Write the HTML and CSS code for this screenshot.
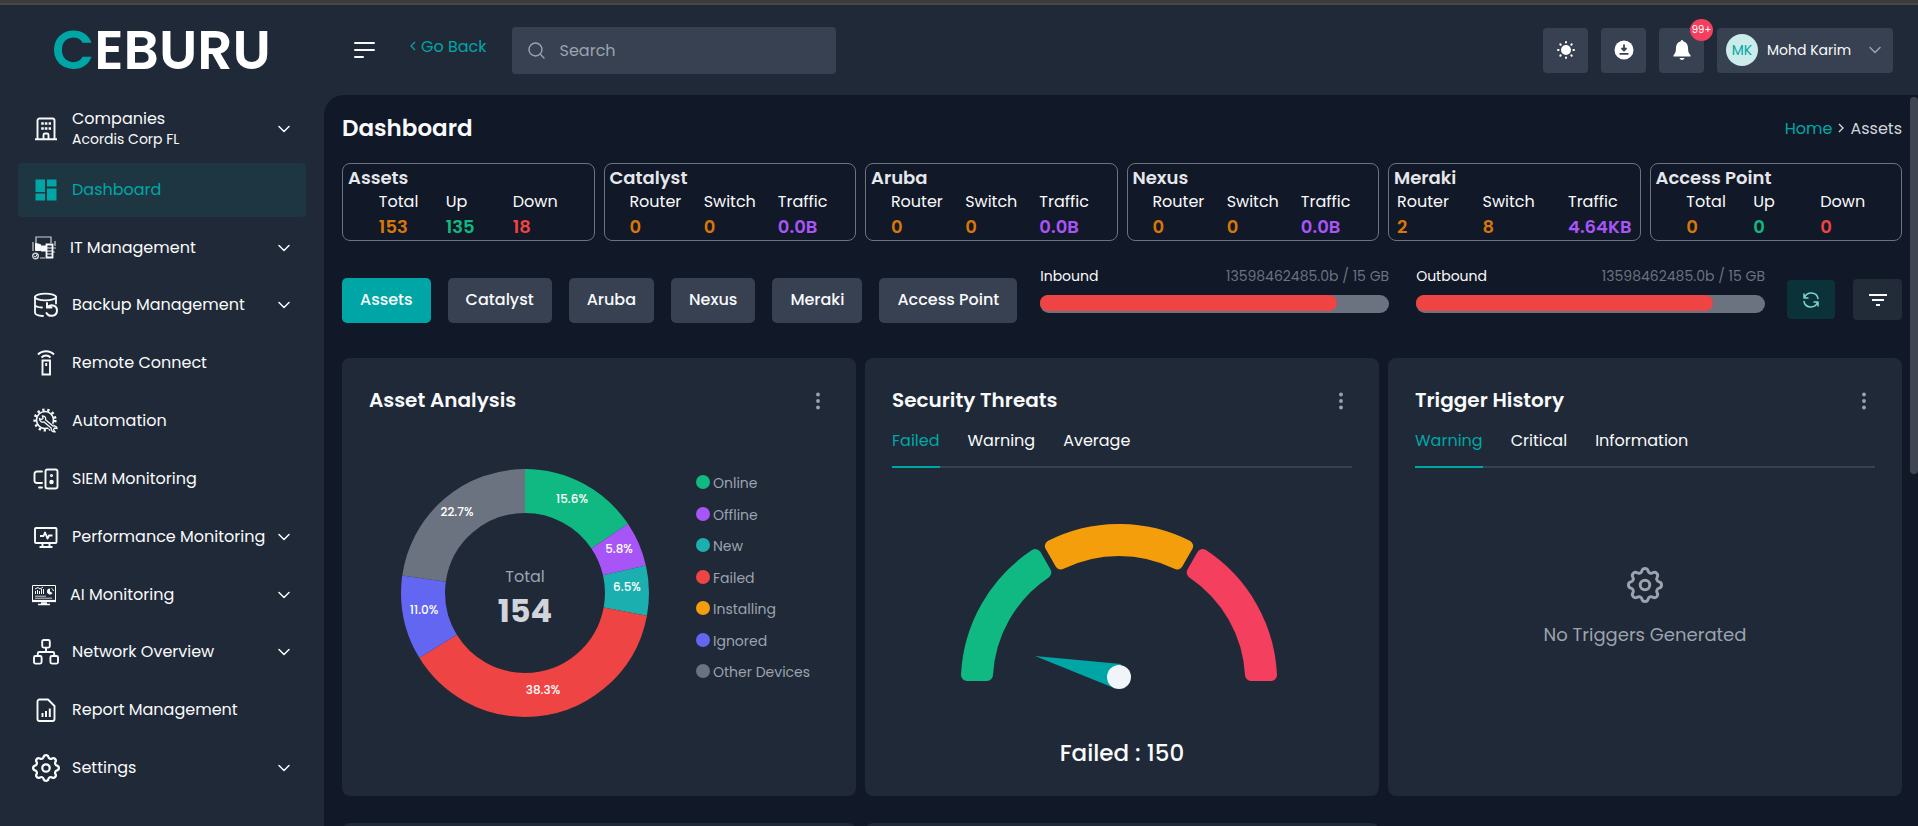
FILE: index.html
```html
<!DOCTYPE html>
<html lang="en">
<head>
    <meta charset="UTF-8">
    <meta name="viewport" content="width=device-width, initial-scale=1.0">
    <title>Ceburu - Dashboard</title>
    <link rel="stylesheet" href="styles.css">
</head>
<body>
    <!-- Shared icons -->
    <svg class="sprite" aria-hidden="true">
        <symbol id="icon-chevron" viewBox="0 0 12 8"><path d="M1 1.5l5 5 5-5" fill="none" stroke="currentColor" stroke-width="1.5" stroke-linecap="round" stroke-linejoin="round"/></symbol>
        <symbol id="icon-more" viewBox="0 0 4 18"><circle cx="2" cy="2.5" r="1.9" fill="currentColor"/><circle cx="2" cy="9" r="1.9" fill="currentColor"/><circle cx="2" cy="15.5" r="1.9" fill="currentColor"/></symbol>
        <symbol id="icon-gear" viewBox="2.2 2.2 19.6 19.6"><g fill="none" stroke="currentColor" stroke-width="1.6" stroke-linejoin="round"><path d="M10.325 4.317c.426-1.756 2.924-1.756 3.35 0a1.724 1.724 0 0 0 2.573 1.066c1.543-.94 3.31.826 2.37 2.37a1.724 1.724 0 0 0 1.065 2.572c1.756.426 1.756 2.924 0 3.35a1.724 1.724 0 0 0-1.066 2.573c.94 1.543-.826 3.31-2.37 2.37a1.724 1.724 0 0 0-2.572 1.065c-.426 1.756-2.924 1.756-3.35 0a1.724 1.724 0 0 0-2.573-1.066c-1.543.94-3.31-.826-2.37-2.37a1.724 1.724 0 0 0-1.065-2.572c-1.756-.426-1.756-2.924 0-3.35a1.724 1.724 0 0 0 1.066-2.573c-.94-1.543.826-3.31 2.37-2.37 1 .608 2.296.07 2.572-1.065z"/><circle cx="12" cy="12" r="2.6"/></g></symbol>
    </svg>

    <div class="window-edge"></div>
    <div class="app">
        <!-- Sidebar -->
        <aside class="sidebar">
            <a href="#" class="logo"><span class="logo-accent">C</span>EBURU</a>
            <nav class="menu">
                <a href="#" class="menu-item menu-company">
                    <svg class="menu-icon" viewBox="0 0 24 24" fill="none" stroke="currentColor" stroke-width="1.9"><path d="M1 22.2h22M3.5 22V3.5a2 2 0 0 1 2-2h13a2 2 0 0 1 2 2V22M9.5 22v-4a1.5 1.5 0 0 1 1.5-1.5h2a1.5 1.5 0 0 1 1.5 1.5v4"/><path d="M7.2 6.5h2.6M10.8 6.5h2.6M14.6 6.5h2.4M7.2 11.5h2.6M10.8 11.5h2.6M14.6 11.5h2.4" stroke-width="2.4"/></svg>
                    <span class="menu-label">Companies<small>Acordis Corp FL</small></span>
                    <svg class="chevron"><use href="#icon-chevron"/></svg>
                </a>
                <a href="#" class="menu-item active">
                    <svg class="menu-icon" viewBox="0 0 24 24" fill="currentColor"><path d="M1.5 1.5H11V14H1.5zM13 1.5h9.5v7H13zM1.5 15.5H11v7H1.500zM13 10.500h9.500v12H13z"/></svg>
                    <span class="menu-label">Dashboard</span>
                </a>
                <a href="#" class="menu-item menu-image">
                    <svg class="menu-icon" viewBox="0 0 24 24" fill="none" stroke="currentColor"><path d="M4 8V1h15v6M1 6v9M23 5v5M20 12h4M20 16h3M8 22h5" stroke-width="1.2" opacity=".8"/><path d="M3.5 7.5l5 1v6h-5zM9 10h5v5H9z" fill="currentColor"/><path d="M14.5 8.5h6v13h-6z" stroke-width="1.8"/><path d="M15 12h5M15 15h5M15 18h5"/><circle cx="3.5" cy="20" r="2.8" stroke-width="1.4" opacity=".8"/><path d="M2 20l1.5 1 2-3"/></svg>
                    <span class="menu-label">IT Management</span>
                    <svg class="chevron"><use href="#icon-chevron"/></svg>
                </a>
                <a href="#" class="menu-item">
                    <svg class="menu-icon" viewBox="0 0 24 24" fill="none" stroke="currentColor" stroke-width="1.8" stroke-linecap="round"><ellipse cx="11.5" cy="4" rx="10.5" ry="3.3"/><path d="M1 4v15.500c0 2 3.500 3.300 8 3.500M22 4v6.500M1 12c.5 1.500 3 2.300 7 2.500"/><path d="M13 10v4.500h4.500M13.500 14.500c2-3.500 9.500-3 9.500 3s-8 7-10.500 2.500" stroke-width="2"/></svg>
                    <span class="menu-label">Backup Management</span>
                    <svg class="chevron"><use href="#icon-chevron"/></svg>
                </a>
                <a href="#" class="menu-item">
                    <svg class="menu-icon" viewBox="0 0 24 24" fill="none" stroke="currentColor" stroke-width="1.9"><path d="M4 3.500c4-4.300 12-4.300 16 0M7.500 6.500c2.500-2.600 6.500-2.600 9 0M8.500 9.500h7.500v14H8.500z"/><path d="M12.200 12v3"/></svg>
                    <span class="menu-label">Remote Connect</span>
                </a>
                <a href="#" class="menu-item">
                    <svg class="menu-icon" viewBox="0 0 24 24" fill="none" stroke="currentColor"><circle cx="11" cy="11" r="8.5" stroke-width="1.6"/><circle cx="11" cy="11" r="10.3" stroke-width="2.6" stroke-dasharray="2.3 2.75"/><path d="M10 11l10.500 9.500" stroke="#1f2937" stroke-width="6"/><path d="M5.500 9.500l2 1 1.500-1-.5-2.500c3 0 3.500 2 3 3.800l7.500 6.200c2.500-.5 4 .8 4 2.500l-2.500-.5-1 1.800 1.500 2c-2.500.3-4-1-3.800-3.800L10 13c-2.500.6-4.500-1-4.500-3.500z" stroke-width="1.3"/></svg>
                    <span class="menu-label">Automation</span>
                </a>
                <a href="#" class="menu-item">
                    <svg class="menu-icon" viewBox="0 0 24 24" fill="none" stroke="currentColor" stroke-width="1.9" stroke-linecap="round"><path d="M8 4.500H3a2.500 2.500 0 0 0-2.500 2.500v6.500A2.500 2.500 0 0 0 3 16h5M5 20.500h3"/><rect x="11.5" y="2.5" width="12" height="19" rx="2"/><circle cx="17.5" cy="8.5" r=".6"/><circle cx="17.5" cy="15" r="1.3" fill="currentColor"/></svg>
                    <span class="menu-label">SIEM Monitoring</span>
                </a>
                <a href="#" class="menu-item">
                    <svg class="menu-icon" viewBox="0 0 24 24" fill="none" stroke="currentColor" stroke-width="1.9" stroke-linejoin="round"><rect x="1" y="3" width="21.5" height="15" rx="1"/><path d="M8.500 18v3.500M15.500 18v3.500M5.500 22h13M6 11h3.500l1.500-3.500 2.500 6 1.500-3h3.500"/></svg>
                    <span class="menu-label">Performance Monitoring</span>
                    <svg class="chevron"><use href="#icon-chevron"/></svg>
                </a>
                <a href="#" class="menu-item menu-image">
                    <svg class="menu-icon" viewBox="0 0 24 24" fill="none" stroke="currentColor"><path d="M.5 18V2.500h23V18"/><path d="M0 18h24" stroke-width="2.2"/><path d="M9 20h6M6 21.500h12" stroke-width="1.4"/><path d="M3.500 11V8M5.500 11V7M7.500 11V8M9.500 11V6M11.500 11V6M3 6l3-1.500L8 6l3-2"/><path d="M3 13.200h11M3 15.200h17" opacity=".8"/><path d="M18 5.500v3l2.500 1.500a3 3 0 1 1-2.500-4.500z" fill="currentColor" stroke="none"/><path d="M19.500 5.500a3 3 0 0 1 2 2.500"/></svg>
                    <span class="menu-label">AI Monitoring</span>
                    <svg class="chevron"><use href="#icon-chevron"/></svg>
                </a>
                <a href="#" class="menu-item">
                    <svg class="menu-icon" viewBox="0 0 24 24" fill="none" stroke="currentColor" stroke-width="1.9"><rect x="8.2" y="0" width="7.6" height="7.6" rx="1.5"/><rect x="0" y="16" width="7.6" height="7.6" rx="1.5"/><rect x="16.4" y="16" width="7.6" height="7.6" rx="1.5"/><path d="M12 8v4M3.800 16v-2.500A1.500 1.500 0 0 1 5.300 12h13.400a1.500 1.500 0 0 1 1.500 1.500V16"/></svg>
                    <span class="menu-label">Network Overview</span>
                    <svg class="chevron"><use href="#icon-chevron"/></svg>
                </a>
                <a href="#" class="menu-item">
                    <svg class="menu-icon" viewBox="0 0 24 24" fill="none" stroke="currentColor" stroke-width="1.9"><path d="M14 1.500H5.500a2 2 0 0 0-2 2v17.500a2 2 0 0 0 2 2h13a2 2 0 0 0 2-2V8z" stroke-linejoin="round"/><path d="M8.500 15v4M12 13v6M15.800 10.500V19" stroke-width="2"/></svg>
                    <span class="menu-label">Report Management</span>
                </a>
                <a href="#" class="menu-item">
                    <svg class="menu-icon menu-icon-lg"><use href="#icon-gear"/></svg>
                    <span class="menu-label">Settings</span>
                    <svg class="chevron"><use href="#icon-chevron"/></svg>
                </a>
            </nav>
        </aside>

        <div class="page">
            <!-- Top bar -->
            <header class="topbar">
                <button class="menu-toggle" aria-label="Toggle menu">
                    <svg width="22" height="18" viewBox="0 0 22 18" fill="none" stroke="currentColor" stroke-width="2" stroke-linecap="round"><path d="M1 2h19M1 9h19M1 16h8"/></svg>
                </button>
                <a href="#" class="go-back">
                    <svg width="6" height="10" viewBox="0 0 6 10" fill="none" stroke="currentColor" stroke-width="1.3"><path d="M5 1L1 5l4 4"/></svg>
                    Go Back
                </a>
                <label class="search">
                    <svg width="17" height="17" viewBox="0 0 17 17" fill="none" stroke="currentColor" stroke-width="1.4" stroke-linecap="round"><circle cx="7.5" cy="7.5" r="6.5"/><path d="M12.500 12.500l3.500 3.500"/></svg>
                    <input type="search" placeholder="Search" aria-label="Search">
                </label>
                <div class="topbar-actions">
                    <button class="icon-btn" aria-label="Theme">
                        <svg width="20" height="20" viewBox="0 0 20 20" fill="none" stroke="currentColor" stroke-width="2" stroke-linecap="round"><circle cx="10" cy="10" r="4" fill="currentColor"/><path d="M10 2v.6M10 17.400v.6M2 10h.6M17.400 10h.6M4.300 4.300l.4.4M15.300 15.300l.4.4M4.300 15.700l.4-.4M15.300 4.700l.4-.4"/></svg>
                    </button>
                    <button class="icon-btn" aria-label="Download">
                        <svg width="20" height="20" viewBox="0 0 20 20"><circle cx="10" cy="10" r="9.5" fill="currentColor"/><path d="M10 4.500V10M7.500 8l2.500 2.500L12.500 8M5.500 13.800h9" fill="none" stroke="#374151" stroke-width="1.8"/></svg>
                    </button>
                    <button class="icon-btn" aria-label="Notifications">
                        <svg width="18" height="20" viewBox="0 0 18 20" fill="currentColor"><path d="M9 0a1.800 1.800 0 0 1 1.500 1.500c3 .8 4.300 3 4.500 6 .1 4 .6 6 2.500 7.500v1.500H.5V15C2.400 13.500 2.900 11.500 3 7.500c.2-3 1.500-5.200 4.500-6A1.800 1.800 0 0 1 9 0zM6.500 18h5c-.5 1.300-1.300 2-2.500 2s-2-.7-2.500-2z"/></svg>
                        <span class="badge">99+</span>
                    </button>
                    <button class="user-btn">
                        <span class="avatar">MK</span>
                        <span class="user-name">Mohd Karim</span>
                        <svg class="chevron"><use href="#icon-chevron"/></svg>
                    </button>
                </div>
            </header>

            <!-- Content -->
            <main class="content">
                <div class="scroll-thumb"></div>
                <div class="page-head">
                    <h1>Dashboard</h1>
                    <nav class="breadcrumb">
                        <a href="#">Home</a>
                        <svg width="6" height="10" viewBox="0 0 6 10" fill="none" stroke="currentColor" stroke-width="1.4"><path d="M1 1l4 4-4 4"/></svg>
                        <span>Assets</span>
                    </nav>
                </div>

                <section class="stats">
                    <div class="stat-card">
                        <h2>Assets</h2>
                        <dl>
                            <div><dt>Total</dt><dd class="orange">153</dd></div>
                            <div><dt>Up</dt><dd class="green">135</dd></div>
                            <div><dt>Down</dt><dd class="red">18</dd></div>
                        </dl>
                    </div>
                    <div class="stat-card">
                        <h2>Catalyst</h2>
                        <dl>
                            <div><dt>Router</dt><dd class="orange">0</dd></div>
                            <div><dt>Switch</dt><dd class="orange">0</dd></div>
                            <div><dt>Traffic</dt><dd class="purple">0.0B</dd></div>
                        </dl>
                    </div>
                    <div class="stat-card">
                        <h2>Aruba</h2>
                        <dl>
                            <div><dt>Router</dt><dd class="orange">0</dd></div>
                            <div><dt>Switch</dt><dd class="orange">0</dd></div>
                            <div><dt>Traffic</dt><dd class="purple">0.0B</dd></div>
                        </dl>
                    </div>
                    <div class="stat-card">
                        <h2>Nexus</h2>
                        <dl>
                            <div><dt>Router</dt><dd class="orange">0</dd></div>
                            <div><dt>Switch</dt><dd class="orange">0</dd></div>
                            <div><dt>Traffic</dt><dd class="purple">0.0B</dd></div>
                        </dl>
                    </div>
                    <div class="stat-card">
                        <h2>Meraki</h2>
                        <dl>
                            <div><dt>Router</dt><dd class="orange">2</dd></div>
                            <div><dt>Switch</dt><dd class="orange">8</dd></div>
                            <div><dt>Traffic</dt><dd class="purple">4.64KB</dd></div>
                        </dl>
                    </div>
                    <div class="stat-card">
                        <h2>Access Point</h2>
                        <dl>
                            <div><dt>Total</dt><dd class="orange">0</dd></div>
                            <div><dt>Up</dt><dd class="green">0</dd></div>
                            <div><dt>Down</dt><dd class="red">0</dd></div>
                        </dl>
                    </div>
                </section>

                <section class="toolbar">
                    <div class="device-tabs">
                        <button class="device-tab active">Assets</button>
                        <button class="device-tab">Catalyst</button>
                        <button class="device-tab">Aruba</button>
                        <button class="device-tab">Nexus</button>
                        <button class="device-tab">Meraki</button>
                        <button class="device-tab">Access Point</button>
                    </div>
                    <div class="meters">
                        <div class="meter">
                            <div class="meter-head"><span>Inbound</span><span class="meter-value">13598462485.0b / 15 GB</span></div>
                            <div class="meter-track"><div class="meter-fill" style="width: 85%"></div></div>
                        </div>
                        <div class="meter">
                            <div class="meter-head"><span>Outbound</span><span class="meter-value">13598462485.0b / 15 GB</span></div>
                            <div class="meter-track"><div class="meter-fill" style="width: 85%"></div></div>
                        </div>
                    </div>
                    <button class="tool-btn refresh" aria-label="Refresh">
                        <svg width="18" height="18" viewBox="0 0 18 18" fill="none" stroke="currentColor" stroke-width="1.5" stroke-linecap="round" stroke-linejoin="round"><path d="M2 3v4h4M2.500 6.500C4 3 7 1.800 10 2.100c3.300.4 5.500 2.500 6 5.400M16 15v-4h-4M15.500 11.500C14 15 11 16.200 8 15.900c-3.300-.4-5.500-2.500-6-5.400"/></svg>
                    </button>
                    <button class="tool-btn" aria-label="Filter">
                        <svg width="18" height="14" viewBox="0 0 18 14" fill="none" stroke="currentColor" stroke-width="2"><path d="M0 2h18M3 7h12M7 12h4"/></svg>
                    </button>
                </section>

                <section class="cards">
                    <article class="card">
                        <div class="card-head">
                            <h3>Asset Analysis</h3>
                            <button class="more" aria-label="More"><svg><use href="#icon-more"/></svg></button>
                        </div>
                        <div class="analysis">
                            <!-- one unit of path length per device, 154 in total -->
                            <svg class="donut" viewBox="0 0 248 248">
                                <g fill="none" stroke-width="44" transform="rotate(-90 124 124)">
                                    <circle cx="124" cy="124" r="102" pathLength="154" stroke="#10b981" stroke-dasharray="24 130"/>
                                    <circle cx="124" cy="124" r="102" pathLength="154" stroke="#a855f7" stroke-dasharray="9 145" stroke-dashoffset="-24"/>
                                    <circle cx="124" cy="124" r="102" pathLength="154" stroke="#1cafb0" stroke-dasharray="10 144" stroke-dashoffset="-33"/>
                                    <circle cx="124" cy="124" r="102" pathLength="154" stroke="#ef4444" stroke-dasharray="59 95" stroke-dashoffset="-43"/>
                                    <circle cx="124" cy="124" r="102" pathLength="154" stroke="#6366f1" stroke-dasharray="17 137" stroke-dashoffset="-102"/>
                                    <circle cx="124" cy="124" r="102" pathLength="154" stroke="#6b7280" stroke-dasharray="35 119" stroke-dashoffset="-119"/>
                                </g>
                                <g class="donut-labels">
                                    <text x="171" y="34">15.6%</text>
                                    <text x="218" y="84">5.8%</text>
                                    <text x="226" y="122">6.5%</text>
                                    <text x="142" y="225">38.3%</text>
                                    <text x="23" y="145">11.0%</text>
                                    <text x="56" y="47">22.7%</text>
                                </g>
                                <text class="donut-caption" x="124" y="113">Total</text>
                                <text class="donut-total" x="124" y="153">154</text>
                            </svg>
                            <ul class="legend">
                                <li class="online">Online</li>
                                <li class="offline">Offline</li>
                                <li class="new">New</li>
                                <li class="failed">Failed</li>
                                <li class="installing">Installing</li>
                                <li class="ignored">Ignored</li>
                                <li class="other">Other Devices</li>
                            </ul>
                        </div>
                    </article>

                    <article class="card">
                        <div class="card-head">
                            <h3>Security Threats</h3>
                            <button class="more" aria-label="More"><svg><use href="#icon-more"/></svg></button>
                        </div>
                        <div class="tabs">
                            <button class="tab active">Failed</button>
                            <button class="tab">Warning</button>
                            <button class="tab">Average</button>
                        </div>
                        <div class="gauge">
                            <svg width="324" height="166" viewBox="0 0 324 166">
                                <g transform="translate(159 158)" stroke-width="12" stroke-linejoin="round">
                                    <path fill="#10b981" stroke="#10b981" d="M-152-7A152 152 0 0 1-83.700-126.900L-73.700-109.600A132 132 0 0 0-132-7z"/>
                                    <path fill="#f59e0b" stroke="#f59e0b" d="M-68.100-135.900A152 152 0 0 1 68.100-135.900L58.100-118.600A132 132 0 0 0-58.100-118.600z"/>
                                    <path fill="#f43f5e" stroke="#f43f5e" d="M83.700-126.900A152 152 0 0 1 152-7H132A132 132 0 0 0 73.700-109.600z"/>
                                </g>
                                <path fill="#00a6a6" d="M75 132l86 8-7 24z"/>
                                <circle cx="159" cy="153" r="12" fill="#f1f5f9"/>
                            </svg>
                            <p>Failed : 150</p>
                        </div>
                    </article>

                    <article class="card">
                        <div class="card-head">
                            <h3>Trigger History</h3>
                            <button class="more" aria-label="More"><svg><use href="#icon-more"/></svg></button>
                        </div>
                        <div class="tabs">
                            <button class="tab active">Warning</button>
                            <button class="tab">Critical</button>
                            <button class="tab">Information</button>
                        </div>
                        <div class="empty">
                            <svg width="36" height="36"><use href="#icon-gear"/></svg>
                            <p>No Triggers Generated</p>
                        </div>
                    </article>

                    <article class="card"></article>
                    <article class="card"></article>
                </section>
            </main>
        </div>
    </div>
</body>
</html>
```
FILE: styles.css
```css
* {
    margin: 0;
    padding: 0;
    box-sizing: border-box;
}

body {
    font-family: 'Poppins', 'Inter', sans-serif;
    font-size: 16px;
    background: #1f2937;
    color: #f9fafb;
    height: 100vh;
    display: flex;
    flex-direction: column;
    overflow: hidden;
}

a {
    color: inherit;
    text-decoration: none;
}

button {
    font: inherit;
    color: inherit;
    background: none;
    border: none;
    cursor: pointer;
}

svg {
    display: block;
    flex-shrink: 0;
}

.sprite {
    position: absolute;
    width: 0;
    height: 0;
}

.window-edge {
    height: 5px;
    flex-shrink: 0;
    background: #3b3b3b;
    border-bottom: 2px solid #464646;
}

.app {
    flex: 1;
    display: flex;
    min-height: 0;
}

/* Sidebar */
.sidebar {
    width: 324px;
    flex-shrink: 0;
    padding: 15px 18px;
}

.logo {
    display: block;
    font-size: 55px;
    font-weight: 600;
    line-height: 60px;
    padding-left: 34px;
    color: #fff;
}

.logo-accent {
    color: #00a6a6;
}

.menu {
    display: flex;
    flex-direction: column;
    gap: 4px;
    padding-top: 19px;
}

.menu-item {
    display: flex;
    align-items: center;
    height: 54px;
    padding: 0 16px;
    border-radius: 4px;
}

.menu-item.active {
    background: #1e3641;
    color: #00a6a6;
}

.menu-company {
    height: 60px;
}

.menu-image {
    height: 53px;
    padding-left: 14px;
}

.menu-icon {
    width: 24px;
    height: 24px;
    margin-right: 14px;
    overflow: visible;
}

.menu-icon-lg {
    width: 28px;
    height: 28px;
    margin: 0 12px 0 -2px;
}

.menu-label {
    flex: 1;
    line-height: 20px;
}

.menu-label small {
    display: block;
    font-size: 14px;
}

.chevron {
    width: 12px;
    height: 8px;
}

/* Top bar */
.page {
    flex: 1;
    min-width: 0;
    display: flex;
    flex-direction: column;
}

.topbar {
    height: 90px;
    flex-shrink: 0;
    display: flex;
    align-items: center;
    padding: 0 25px 0 30px;
}

.go-back {
    display: flex;
    align-items: center;
    gap: 5px;
    margin: 0 25px 0 34px;
    padding-bottom: 8px;
    color: #00a6a6;
}

.search {
    width: 324px;
    height: 47px;
    display: flex;
    align-items: center;
    gap: 15px;
    padding: 0 16px;
    border-radius: 4px;
    background: #374151;
    color: #9ca3af;
}

.search input {
    width: 100%;
    border: none;
    outline: none;
    background: none;
    font: inherit;
    color: inherit;
}

.search input::placeholder {
    color: #9ca3af;
}

.topbar-actions {
    display: flex;
    gap: 13px;
    margin-left: auto;
}

.icon-btn {
    position: relative;
    width: 45px;
    height: 45px;
    display: grid;
    place-items: center;
    border-radius: 4px;
    background: #374151;
    color: #fff;
}

.badge {
    position: absolute;
    top: -9px;
    right: -9px;
    width: 23px;
    height: 22px;
    border-radius: 50%;
    background: #f43f5e;
    font-size: 10px;
    line-height: 22px;
}

.user-btn {
    width: 176px;
    height: 45px;
    display: flex;
    align-items: center;
    padding: 0 12px 0 9px;
    border-radius: 4px;
    background: #374151;
    font-size: 14px;
}

.user-btn .chevron {
    margin-left: auto;
    color: #9ca3af;
}

.avatar {
    width: 32px;
    height: 32px;
    margin-right: 9px;
    border-radius: 50%;
    background: #ccecec;
    color: #00a6a6;
    line-height: 32px;
}

/* Content */
.content {
    position: relative;
    flex: 1;
    min-height: 0;
    overflow: hidden;
    padding: 20px 16px 0 18px;
    border-top-left-radius: 20px;
    background: #111827;
}

.scroll-thumb {
    position: absolute;
    top: 2px;
    right: 0;
    width: 8px;
    height: 377px;
    border-radius: 4px;
    background: #3f4551;
}

.page-head {
    display: flex;
    justify-content: space-between;
    align-items: center;
    margin-bottom: 22px;
}

.page-head h1 {
    font-size: 23px;
    font-weight: 600;
    line-height: 26px;
}

.breadcrumb {
    display: flex;
    align-items: center;
    gap: 6px;
    color: #d1d5db;
}

.breadcrumb a {
    color: #00a6a6;
}

.stats {
    display: grid;
    grid-template-columns: repeat(6, 1fr);
    gap: 9px;
    margin-bottom: 26px;
}

.stat-card {
    padding-top: 2px;
    border: 1px solid #6b7280;
    border-radius: 8px;
}

.stat-card h2 {
    padding-left: 5px;
    font-size: 18px;
    font-weight: 600;
    line-height: 24px;
    color: #e5e7eb;
}

.stat-card dl {
    display: grid;
    grid-template-columns: repeat(3, 1fr);
    gap: 22px;
    width: max-content;
    margin: 0 auto;
}

.stat-card dt {
    line-height: 24px;
}

.stat-card dd {
    font-size: 18px;
    font-weight: 600;
    line-height: 26px;
}

.orange {
    color: #d97706;
}

.green {
    color: #10b981;
}

.red {
    color: #ef4444;
}

.purple {
    color: #a855f7;
}

.toolbar {
    display: flex;
    align-items: flex-end;
    margin-bottom: 35px;
}

.device-tabs {
    display: flex;
    gap: 17px;
}

.device-tab {
    height: 45px;
    padding: 0 18px 2px;
    border-radius: 5px;
    background: #374151;
    font-weight: 500;
}

.device-tab.active {
    background: #00a6a6;
}

.meters {
    flex: 1;
    display: flex;
    gap: 27px;
    padding: 0 22px 10px 23px;
}

.meter {
    flex: 1;
}

.meter-head {
    display: flex;
    justify-content: space-between;
    margin-bottom: 10px;
    font-size: 14px;
    line-height: 18px;
}

.meter-value {
    color: #6b7280;
}

.meter-track {
    height: 18px;
    border-radius: 9px;
    background: #6b7280;
}

.meter-fill {
    height: 16px;
    border-radius: 8px;
    background: #ef4444;
}

.tool-btn {
    width: 49px;
    height: 41px;
    margin-bottom: 3px;
    display: grid;
    place-items: center;
    border-radius: 4px;
    background: #222b38;
}

.tool-btn.refresh {
    width: 48px;
    height: 39px;
    margin: 0 18px 4px 0;
    background: #0b3239;
    color: #7fd3d3;
}

/* Cards */
.cards {
    display: grid;
    grid-template-columns: repeat(3, 1fr);
    gap: 27px 9px;
}

.card {
    min-height: 438px;
    padding: 27px;
    border-radius: 8px;
    background: #1f2937;
}

.card-head {
    display: flex;
    justify-content: space-between;
    align-items: center;
}

.card-head h3 {
    font-size: 20px;
    font-weight: 600;
    line-height: 30px;
}

.more {
    padding: 2px 9px 0;
    color: #9ca3af;
}

.more svg {
    width: 4px;
    height: 18px;
}

.analysis {
    display: flex;
    align-items: flex-start;
    gap: 47px;
    padding: 54px 0 0 32px;
}

.donut {
    width: 248px;
    height: 248px;
}

.donut text {
    text-anchor: middle;
}

.donut-labels {
    font-size: 12px;
    font-weight: 500;
    fill: #fff;
}

.donut-caption {
    font-size: 16px;
    fill: #9ca3af;
}

.donut-total {
    font-size: 32px;
    font-weight: 700;
    fill: #d1d5db;
}

.legend {
    height: 214px;
    padding-top: 4px;
    display: flex;
    flex-direction: column;
    justify-content: space-between;
    list-style: none;
    font-size: 14px;
    line-height: 21px;
    color: #9ca3af;
}

.legend li {
    display: flex;
    align-items: center;
    gap: 3px;
}

.legend li::before {
    content: '';
    width: 14px;
    height: 14px;
    margin-bottom: 3px;
    border-radius: 50%;
    background: #6b7280;
}

.legend .online::before {
    background: #10b981;
}

.legend .offline::before {
    background: #a855f7;
}

.legend .new::before {
    background: #1cafb0;
}

.legend .failed::before {
    background: #ef4444;
}

.legend .installing::before {
    background: #f59e0b;
}

.legend .ignored::before {
    background: #6366f1;
}

.tabs {
    display: flex;
    gap: 28px;
    box-shadow: inset 0 -2px #374151;
}

.tab {
    padding: 14px 0 13px;
    border-bottom: 2px solid transparent;
    line-height: 24px;
}

.tab.active {
    color: #00a6a6;
    border-color: #00a6a6;
}

.gauge {
    display: flex;
    flex-direction: column;
    align-items: center;
    padding-top: 56px;
}

.gauge p {
    margin-top: 48px;
    font-size: 23px;
    font-weight: 500;
    line-height: 30px;
}

.empty {
    display: flex;
    flex-direction: column;
    align-items: center;
    gap: 18px;
    padding-top: 99px;
    color: #9ca3af;
}

.empty p {
    font-size: 18px;
    line-height: 28px;
}
```
